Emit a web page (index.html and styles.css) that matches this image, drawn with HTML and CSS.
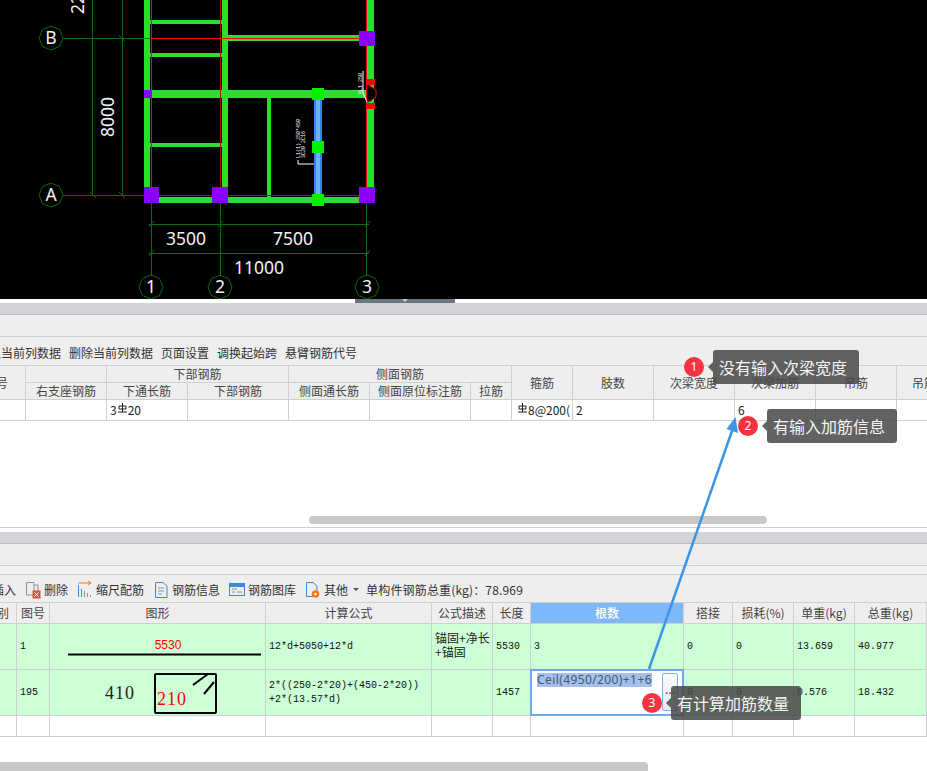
FILE: index.html
```html
<!DOCTYPE html>
<html lang="zh-CN">
<head>
<meta charset="utf-8">
<title>钢筋</title>
<link rel="stylesheet" href="styles.css">
</head>
<body>
<div class="page">
  <svg class="cad" width="927" height="299" viewBox="0 0 927 299">
    <g class="walls">
      <rect x="144" y="0" width="6" height="203"/>
      <rect x="222" y="0" width="6" height="203"/>
      <rect x="367" y="0" width="7" height="203"/>
      <rect x="144" y="197" width="230" height="6"/>
      <rect x="150" y="90" width="217" height="8"/>
      <rect x="228" y="35" width="139" height="6"/>
      <rect x="150" y="20" width="72" height="4"/>
      <rect x="150" y="53" width="72" height="4"/>
      <rect x="150" y="143" width="72" height="4"/>
      <rect x="267" y="98" width="4" height="99"/>
    </g>
    <g class="dim">
      <path class="crisp" d="M63 38.500H151M63 195.500H151M92.500 0V195M122.500 0V195M149 224.500H369M149 253.500H369M151.500 203V276M220.500 203V276M366.500 203V276"/>
      <path d="M90 192L96 198M119 192L125 198M119 35L125 41M149 227L154 221M218 227L223 221M365 227L370 221M149 256L154 250M365 256L370 250"/>
      <path d="M51 26L59.500 29.500L63 38L59.500 46.500L51 50L42.500 46.500L39 38L42.500 29.500Z"/>
      <path d="M51 183L59.500 186.500L63 195L59.500 203.500L51 207L42.500 203.500L39 195L42.500 186.500Z"/>
      <path d="M151 275L159.500 278.500L163 287L159.500 295.500L151 299L142.500 295.500L139 287L142.500 278.500Z"/>
      <path d="M220 275L228.500 278.500L232 287L228.500 295.500L220 299L211.500 295.500L208 287L211.500 278.500Z"/>
      <path d="M367 275L375.500 278.500L379 287L375.500 295.500L367 299L358.500 295.500L355 287L358.500 278.500Z"/>
    </g>
    <path class="hex-fill" d="M366 85H369L376 90V97L369 102H366Z"/>
    <path class="red crisp" d="M151.500 0V195M366.500 0V195M151 38.500H367"/>
    <path class="dark-red crisp" d="M220.500 0V195M151 195.500H367"/>
    <g class="purple">
      <rect x="144" y="187" width="15" height="16"/>
      <rect x="212" y="187" width="16" height="16"/>
      <rect x="359" y="187" width="16" height="16"/>
      <rect x="359" y="31" width="16" height="15"/>
      <rect x="144" y="90" width="8" height="8"/>
    </g>
    <rect class="col-blue" x="314" y="98" width="8" height="98"/>
    <rect class="col-light" x="316" y="98" width="4" height="98"/>
    <g class="node">
      <rect x="312" y="88" width="12" height="12"/>
      <rect x="312" y="141" width="12" height="12"/>
      <rect x="312" y="194" width="12" height="12"/>
    </g>
    <rect class="red-fill" x="366" y="79" width="9" height="6"/>
    <rect class="red-fill" x="366" y="103" width="9" height="6"/>
    <path class="red-line" d="M369 85L376 90V97L369 102"/>
    <path class="white-line" d="M363 71V93L367 102M298 160V164H314"/>
    <text class="tiny" transform="translate(362 94) rotate(-90)">KL1 250</text>
    <text class="tiny" transform="translate(300 158) rotate(-90)">L1(1) 250*450</text>
    <text class="tiny" transform="translate(305 158) rotate(-90)">3C20 2C16</text>
    <g class="label">
      <text x="51" y="44" text-anchor="middle">B</text>
      <text x="51" y="201" text-anchor="middle">A</text>
      <text x="151" y="293" text-anchor="middle">1</text>
      <text x="220" y="293" text-anchor="middle">2</text>
      <text x="367" y="293" text-anchor="middle">3</text>
      <text x="186" y="245" text-anchor="middle">3500</text>
      <text x="293" y="245" text-anchor="middle">7500</text>
      <text x="259" y="274" text-anchor="middle">11000</text>
      <text transform="translate(114 117) rotate(-90)" text-anchor="middle">8000</text>
      <text transform="translate(84 14) rotate(-90)">2200</text>
    </g>
  </svg>

  <div class="splitter"><span class="handle"><i class="handle-tri"></i></span></div>

  <section class="panel panel-top">
    <div class="band"></div>
    <div class="strip"></div>
    <div class="toolbar toolbar-top">
      <span class="tool-clip">插入当前列数据</span>
      <span>删除当前列数据</span>
      <span>页面设置</span>
      <span>调换起始跨</span>
      <span>悬臂钢筋代号</span>
    </div>
    <div class="grid grid-top">
      <div class="hc span-2r first">号</div>
      <div class="hc">&nbsp;</div>
      <div class="hc span-g3">下部钢筋</div>
      <div class="hc span-g3b">侧面钢筋</div>
      <div class="hc r2">箍筋</div>
      <div class="hc r2">肢数</div>
      <div class="hc r2">次梁宽度</div>
      <div class="hc r2">次梁加筋</div>
      <div class="hc r2">吊筋</div>
      <div class="hc r2 end">吊筋锚固</div>
      <div class="hc">右支座钢筋</div>
      <div class="hc">下通长筋</div>
      <div class="hc">下部钢筋</div>
      <div class="hc">侧面通长筋</div>
      <div class="hc">侧面原位标注筋</div>
      <div class="hc">拉筋</div>
      <div class="dc"></div>
      <div class="dc"></div>
      <div class="dc val">3<svg class="rebar" viewBox="0 0 9 10"><path d="M4.500 0V9M1 3H8V6H1ZM0 9H9"/></svg>20</div>
      <div class="dc"></div>
      <div class="dc"></div>
      <div class="dc"></div>
      <div class="dc"></div>
      <div class="dc val tight"><svg class="rebar" viewBox="0 0 9 10"><path d="M4.500 0V9M1 3H8V6H1ZM0 9H9"/></svg>8@200(</div>
      <div class="dc val">2</div>
      <div class="dc"></div>
      <div class="dc val">6</div>
      <div class="dc"></div>
      <div class="dc end"></div>
    </div>
    <div class="blank"><div class="scroll scroll-top"></div></div>
  </section>

  <div class="gap"></div>

  <section class="panel panel-bottom">
    <div class="band"></div>
    <div class="strip"></div>
    <div class="strip2"></div>
    <div class="toolbar toolbar-bottom">
      <span class="tool-clip2">插入</span>
      <span class="tool">
        <svg class="ico" viewBox="0 0 16 18"><path class="i-grey" d="M1.500 1.500H9V14H1.500ZM9 4H13V10"/><rect class="i-red" x="8" y="10" width="7" height="7"/><path class="i-white" d="M9.500 11.500L13.500 15.500M13.500 11.500L9.500 15.500"/></svg>
        删除
      </span>
      <span class="tool">
        <svg class="ico" viewBox="0 0 16 18"><path class="i-orange" d="M1 2H14M11 0L14 2L11 4"/><path class="i-blue" d="M1.500 4V16M4.500 8V16"/><path class="i-grey" d="M7.500 10V16M10.500 12V16M13.500 14V16"/></svg>
        缩尺配筋
      </span>
      <span class="tool">
        <svg class="ico" viewBox="0 0 16 18"><path class="i-blue" d="M2.500 1.500H10L14 5V16.500H2.500Z"/><path class="i-grey" d="M5 7H11M5 10H11M5 13H9"/></svg>
        钢筋信息
      </span>
      <span class="tool">
        <svg class="ico" viewBox="0 0 16 18"><rect class="i-blue" x="0.500" y="2.500" width="15" height="12"/><rect class="i-bluefill" x="0.500" y="2.500" width="15" height="3"/><path class="i-grey" d="M3 8H8M3 11H6M8 11H13"/></svg>
        钢筋图库
      </span>
      <span class="tool tool-other">
        <svg class="ico" viewBox="0 0 16 18"><path class="i-blue" d="M1.500 1.500H8L12 5V15.500H1.500Z"/><circle class="i-gear" cx="10.500" cy="13" r="2.500"/></svg>
        其他
      </span>
      <i class="caret"></i>
      <span class="total">单构件钢筋总重(kg)：78.969</span>
    </div>
    <div class="grid grid-bottom">
      <div class="hc first">别</div>
      <div class="hc">图号</div>
      <div class="hc">图形</div>
      <div class="hc">计算公式</div>
      <div class="hc">公式描述</div>
      <div class="hc">长度</div>
      <div class="hc active">根数</div>
      <div class="hc">搭接</div>
      <div class="hc">损耗(%)</div>
      <div class="hc">单重(kg)</div>
      <div class="hc">总重(kg)</div>
      <div class="hc end"></div>

      <div class="bc g"></div>
      <div class="bc g mono">1</div>
      <div class="bc g shape">
        <svg width="215" height="45" viewBox="0 0 215 45">
          <text class="s-red-sm" x="118" y="25" text-anchor="middle">5530</text>
          <path class="s-line" d="M18 30.500H211"/>
        </svg>
      </div>
      <div class="bc g mono">12*d+5050+12*d</div>
      <div class="bc g cjk">锚固+净长<br>+锚固</div>
      <div class="bc g mono">5530</div>
      <div class="bc g mono">3</div>
      <div class="bc g mono">0</div>
      <div class="bc g mono">0</div>
      <div class="bc g mono">13.659</div>
      <div class="bc g mono">40.977</div>
      <div class="bc g end"></div>

      <div class="bc g"></div>
      <div class="bc g mono">195</div>
      <div class="bc g shape">
        <svg width="215" height="45" viewBox="0 0 215 45">
          <text class="s-dark" x="55" y="29">410</text>
          <rect class="s-box" x="105" y="4" width="61" height="39" rx="1"/>
          <text class="s-red" x="107" y="35">210</text>
          <path class="s-hook" d="M143 15L158 4M154 24L164 12"/>
        </svg>
      </div>
      <div class="bc g mono wrap">2*((250-2*20)+(450-2*20))<br>+2*(13.57*d)</div>
      <div class="bc g"></div>
      <div class="bc g mono">1457</div>
      <div class="bc editor">
        <span class="sel">Ceil(4950/200)+1+6</span>
        <span class="dots">...</span>
      </div>
      <div class="bc g mono">0</div>
      <div class="bc g mono">0</div>
      <div class="bc g mono">0.576</div>
      <div class="bc g mono">18.432</div>
      <div class="bc g end"></div>

      <div class="ec"></div><div class="ec"></div><div class="ec"></div><div class="ec"></div>
      <div class="ec"></div><div class="ec"></div><div class="ec"></div><div class="ec"></div>
      <div class="ec"></div><div class="ec"></div><div class="ec"></div><div class="ec end"></div>
    </div>
    <div class="blank-b"><div class="scroll scroll-bottom"></div></div>
  </section>

  <svg class="arrow" width="927" height="771" viewBox="0 0 927 771">
    <path class="arrow-line" d="M649 669L733 428"/>
    <path class="arrow-head" d="M735.500 417L738 433L726.500 429Z"/>
  </svg>

  <div class="note note-1"><b class="badge">1</b><span class="bubble">没有输入次梁宽度</span></div>
  <div class="note note-2"><b class="badge">2</b><span class="bubble">有输入加筋信息</span></div>
  <div class="note note-3"><b class="badge">3</b><span class="bubble">有计算加筋数量</span></div>
</div>
</body>
</html>
```
FILE: styles.css
```css
* { box-sizing: border-box; }
html, body { margin: 0; padding: 0; background: #fff; }
body { width: 927px; height: 771px; overflow: hidden; }
.page {
  position: relative;
  width: 927px;
  height: 771px;
  overflow: hidden;
  font-family: "Noto Sans CJK SC", "Noto Sans", sans-serif;
  font-size: 12px;
  color: #333;
}

/* CAD canvas */
.cad { display: block; background: #000; }
.crisp { shape-rendering: crispEdges; }
.walls rect { fill: #2ade2e; }
.dim path { fill: none; stroke: #0b6a0b; stroke-width: 1; }
.hex-fill { fill: #000; }
.red { fill: none; stroke: #ff0000; stroke-width: 1; }
.dark-red { fill: none; stroke: #a01010; stroke-width: 1; }
.purple rect { fill: #8a00fa; }
.col-blue { fill: #2f86f0; }
.col-light { fill: #6fb0ff; }
.node rect { fill: #00f000; }
.red-fill { fill: #ff0000; }
.red-line { fill: none; stroke: #ff0000; stroke-width: 1; }
.white-line { fill: none; stroke: #fff; stroke-width: 1; }
.tiny { fill: #fff; font-family: "Liberation Mono", monospace; font-size: 5px; }
.label text {
  fill: #f2f2f2;
  font-family: "Noto Sans", sans-serif;
  font-size: 17.500px;
}

/* Splitter */
.splitter { height: 4px; background: #fff; display: flex; padding-left: 355px; }
.handle { width: 100px; height: 4px; background: #6b7680; display: flex; justify-content: center; }
.handle-tri { width: 0; height: 0; border: 3px solid transparent; border-top: 3px solid #c9ced3; border-bottom: 0; }

/* Panels */
.band { height: 12px; background: #d2d4d9; border-bottom: 1px solid #bdbdbd; }
.strip { height: 22px; background: #eeeeee; border-bottom: 1px solid #cfcfcf; }
.strip2 { height: 9px; background: #f1f1f1; border-bottom: 1px solid #cfcfcf; }
.toolbar { display: flex; align-items: center; background: #eeeeee; color: #333; white-space: nowrap; overflow: hidden; }
.toolbar-top { height: 28px; padding-top: 2px; gap: 8px; }
.tool-clip { margin-left: -23px; }
.toolbar-bottom { height: 27px; padding-top: 2px; }
.tool-clip2 { margin-left: -8px; width: 33px; }
.tool { display: flex; align-items: center; gap: 3px; margin-right: 9px; }
.tool-other { margin-right: 5px; }
.total { letter-spacing: 0.160px; }
.ico { width: 16px; height: 18px; flex: none; }
.ico path, .ico rect, .ico circle { fill: none; stroke-width: 1; }
.ico .i-grey { stroke: #8a929c; }
.ico .i-blue { stroke: #3f88d8; }
.ico .i-orange { stroke: #f07a20; }
.ico .i-bluefill { fill: #3f88d8; stroke: #3f88d8; }
.ico .i-red { fill: #e8483f; stroke: #e8483f; }
.ico .i-white { stroke: #fff; }
.ico .i-gear { stroke: #f07a20; stroke-width: 2.500px; fill: #fff; }
.caret { width: 0; height: 0; border: 3px solid transparent; border-top: 3px solid #555; border-bottom: 0; margin-right: 7px; }

/* Grids */
.grid { display: grid; border-top: 1px solid #cfcfcf; }
.grid > div { border-right: 1px solid #cfcfcf; border-bottom: 1px solid #cfcfcf; overflow: hidden; white-space: nowrap; }
.grid > .end { border-right: 0; }
.hc { background: #eeeeee; display: flex; align-items: center; justify-content: center; color: #444; line-height: 1; }
.grid-top {
  grid-template-columns: 26px 81px 81px 101px 81px 101px 41px 61px 81px 81px 81px 81px 30px;
  grid-template-rows: 17px 17px 21px;
}
.span-2r { grid-row: span 2; }
.grid-top .first { justify-content: flex-end; padding: 1px 17px 0 0; }
.grid-bottom .first { justify-content: flex-end; padding-right: 7px; }
.span-g3 { grid-column: 3 / span 2; }
.span-g3b { grid-column: 5 / span 3; }
.r2 { grid-row: span 2; }
.end.hc { justify-content: flex-start; padding-left: 15px; }
.dc { background: #fff; }
.val { padding: 0 0 1px 3px; color: #222; line-height: 16px; display: flex; align-items: center; }
.tight { padding-left: 5px; overflow: hidden; }
.rebar { width: 9px; height: 10px; flex: none; margin: -4px 1px 0; }
.rebar path { fill: none; stroke: #222; stroke-width: 1; }
.blank { height: 107px; background: #fff; border-bottom: 1px solid #cfcfcf; padding: 95px 0 0 309px; }
.scroll { background: #c8c8c8; border-radius: 4px; }
.scroll-top { width: 458px; height: 8px; }
.gap { height: 4px; background: #fff; }

.grid-bottom {
  grid-template-columns: 17px 33px 216px 166px 61px 38px 153px 49px 61px 61px 72px 20px;
  grid-template-rows: 21px 46px 46px 21px;
  width: 947px;
  margin-right: -20px;
}
.active { background: #7fb8f8; color: #fff; font-weight: 500; }
.bc { display: flex; align-items: center; color: #111; }
.g { background: #ccffd6; }
.mono { font-family: "Liberation Mono", "DejaVu Sans Mono", monospace; font-size: 10px; padding-left: 3px; }
.wrap { line-height: 14px; }
.cjk { font-size: 12px; line-height: 14px; padding: 0 0 4px 3px; color: #222; }
.shape { padding: 0; }
.shape svg { display: block; }
.s-red-sm { fill: #ff0000; font-family: "Liberation Sans", sans-serif; font-size: 12px; }
.s-line { stroke: #000; stroke-width: 2; fill: none; }
.s-dark { fill: #222; font-family: "Liberation Serif", serif; font-size: 18px; letter-spacing: 1px; }
.s-red { fill: #ff0000; font-family: "Liberation Serif", serif; font-size: 18px; letter-spacing: 1px; }
.s-box { fill: none; stroke: #000; stroke-width: 2; }
.s-hook { fill: none; stroke: #000; stroke-width: 2; }
.ec { background: #fff; }
.editor {
  position: relative;
  background: #fff;
  align-items: flex-start;
  padding: 4px 0 0 7px;
  margin: -1px 0 0 -1px;
  outline: 2px solid #6ea8e8;
  outline-offset: -2px;
}
.grid > .editor { overflow: visible; border-color: #6ea8e8; }
.sel { background: #a5c0ec; color: #44596e; line-height: 14px; height: 14px; font-family: "Noto Sans", sans-serif; letter-spacing: 0.400px; }
.dots {
  position: absolute;
  right: 5px;
  top: 4px;
  width: 16px;
  height: 38px;
  border: 1px solid #7fb0e8;
  border-radius: 2px;
  background: linear-gradient(#fafbfd, #e4e7f2);
  color: #345;
  text-align: center;
  line-height: 30px;
}
.blank-b { height: 35px; background: #fff; padding-top: 25px; }
.scroll-bottom { width: 648px; height: 12px; border-radius: 0 4px 4px 0; }

/* Overlays */
.arrow { position: absolute; left: 0; top: 0; pointer-events: none; }
.arrow-line { fill: none; stroke: #3a96e8; stroke-width: 2.500; }
.arrow-head { fill: #3a96e8; }
.note { position: absolute; display: flex; align-items: center; gap: 9px; }
.note-1 { left: 684px; top: 350px; }
.note-2 { left: 738px; top: 409px; }
.note-3 { left: 642px; top: 686px; }
.badge {
  width: 20px;
  height: 20px;
  border-radius: 50%;
  background: #f5333f;
  color: #fff;
  font-weight: 400;
  font-size: 12px;
  line-height: 20px;
  text-align: center;
  font-family: "Noto Sans", sans-serif;
}
.bubble {
  position: relative;
  height: 34px;
  line-height: 34px;
  padding: 0 0 0 6px;
  background: rgba(70, 70, 70, 0.85);
  border-radius: 3px;
  color: #f4f4f4;
  font-size: 16px;
  white-space: nowrap;
}
.note-1 .bubble { width: 146px; }
.note-2 .bubble, .note-3 .bubble { width: 130px; }
.bubble::before {
  content: "";
  position: absolute;
  left: -5px;
  top: 12px;
  border: 5px solid transparent;
  border-right-color: rgba(70, 70, 70, 0.85);
  border-left: 0;
}
```
